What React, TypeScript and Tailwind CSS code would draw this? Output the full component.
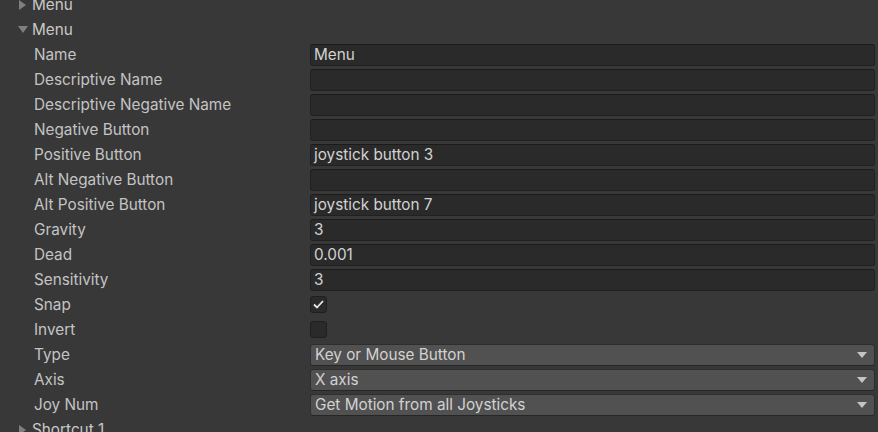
import React from 'react';

type Row =
  | { kind: 'text'; label: string; value?: string }
  | { kind: 'check'; label: string; checked: boolean }
  | { kind: 'select'; label: string; value: string };

const rows: Row[] = [
  { kind: 'text', label: 'Name', value: 'Menu' },
  { kind: 'text', label: 'Descriptive Name' },
  { kind: 'text', label: 'Descriptive Negative Name' },
  { kind: 'text', label: 'Negative Button' },
  { kind: 'text', label: 'Positive Button', value: 'joystick button 3' },
  { kind: 'text', label: 'Alt Negative Button' },
  { kind: 'text', label: 'Alt Positive Button', value: 'joystick button 7' },
  { kind: 'text', label: 'Gravity', value: '3' },
  { kind: 'text', label: 'Dead', value: '0.001' },
  { kind: 'text', label: 'Sensitivity', value: '3' },
  { kind: 'check', label: 'Snap', checked: true },
  { kind: 'check', label: 'Invert', checked: false },
  { kind: 'select', label: 'Type', value: 'Key or Mouse Button' },
  { kind: 'select', label: 'Axis', value: 'X axis' },
  { kind: 'select', label: 'Joy Num', value: 'Get Motion from all Joysticks' },
];

const Foldout: React.FC<{ open?: boolean; label: string }> = ({ open, label }) => (
  <div className="flex items-center h-[25px]">
    <div className="w-[32px] flex items-center pl-[18px]">
      {open ? (
        <svg width="10" height="8" viewBox="0 0 10 8">
          <polygon points="0,0 10,0 5,7" fill="#7f7f7f" />
        </svg>
      ) : (
        <svg width="8" height="10" viewBox="0 0 8 10">
          <polygon points="1,0 8,5 1,10" fill="#7f7f7f" />
        </svg>
      )}
    </div>
    <span className="text-[#c8c8c8]">{label}</span>
  </div>
);

const Field: React.FC<{ row: Row }> = ({ row }) => {
  if (row.kind === 'check') {
    return (
      <div className="w-[17px] h-[17px] rounded-[3px] bg-[#2a2a2a] border border-[#1f1f1f] flex items-center justify-center">
        {row.checked && (
          <svg width="11" height="9" viewBox="0 0 11 9">
            <path d="M1 4.5 L4 7.5 L10 1" stroke="#e6e6e6" strokeWidth="1.8" fill="none" />
          </svg>
        )}
      </div>
    );
  }
  if (row.kind === 'select') {
    return (
      <div className="flex-1 h-[22px] rounded-[3px] bg-[#515151] border border-[#2e2e2e] border-b-[#262626] flex items-center pl-[4px] pr-[7px] text-[#d2d2d2]">
        <span className="flex-1">{row.value}</span>
        <svg width="10" height="6" viewBox="0 0 10 6">
          <polygon points="0,0 10,0 5,6" fill="#c4c4c4" />
        </svg>
      </div>
    );
  }
  return (
    <div className="flex-1 h-[22px] rounded-[3px] bg-[#2a2a2a] border border-[#212121] border-t-[#1b1b1b] flex items-center pl-[3px] text-[#d2d2d2]">
      {row.value}
    </div>
  );
};

export default function App() {
  return (
    <div
      className="w-[878px] h-[432px] bg-[#383838] overflow-hidden text-[15.3px] leading-none"
      style={{ fontFamily: 'Inter, "Noto Sans", sans-serif' }}
    >
      <div className="mt-[-8px] pr-[3px]">
        <Foldout label="Menu" />
        <Foldout open label="Menu" />
        {rows.map((row) => (
          <div key={row.label} className="flex items-center h-[25px]">
            <div className="w-[310px] pl-[34px] text-[#c4c4c4]">{row.label}</div>
            <Field row={row} />
          </div>
        ))}
        <Foldout label="Shortcut 1" />
      </div>
    </div>
  );
}
